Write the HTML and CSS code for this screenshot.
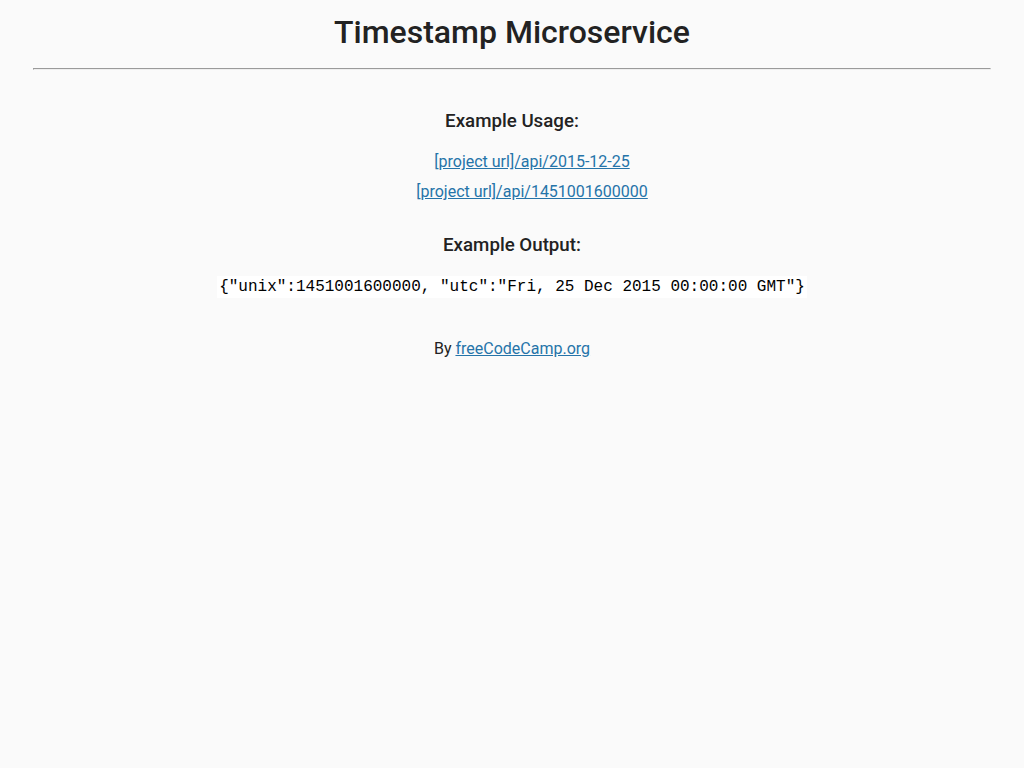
FILE: index.html
```html
<!DOCTYPE html>
<html>
<head>
<meta charset="utf-8">
<title>Timestamp Microservice</title>
<link rel="stylesheet" href="styles.css">
</head>
<body>
<h1>Timestamp Microservice</h1>
<hr>
<div class="container">
  <h3>Example Usage:</h3>
  <ul>
    <li><a href="#">[project url]/api/2015-12-25</a></li>
    <li><a href="#">[project url]/api/1451001600000</a></li>
  </ul>
  <h3>Example Output:</h3>
  <p>
    <code>{"unix":1451001600000, "utc":"Fri, 25 Dec 2015 00:00:00 GMT"}</code>
  </p>
</div>
<div class="footer">
  <p>By <a href="#">freeCodeCamp.org</a></p>
</div>
</body>
</html>
```
FILE: styles.css
```css
body {
  margin: 0 8px;
  font-family: Roboto, sans-serif;
  font-size: 16px;
  color: #222;
  background-color: #fafafa;
  text-align: center;
  line-height: 1.4em;
}

h1 {
  margin-top: 20.5px;
  font-weight: 500;
}

.container {
  padding: 0;
  margin-top: 40px;
}

h3 {
  margin-top: 30px;
  font-weight: 500;
}

hr {
  margin: 25px;
}

.footer {
  margin-top: 40px;
}

code {
  font-family: "Liberation Mono", monospace;
  font-size: 16px;
  padding: 2px;
  color: black;
  background-color: #fff;
}

ul {
  list-style-type: none;
}

li {
  margin-bottom: 0.5em;
}

a {
  color: #2574a9;
}
```
